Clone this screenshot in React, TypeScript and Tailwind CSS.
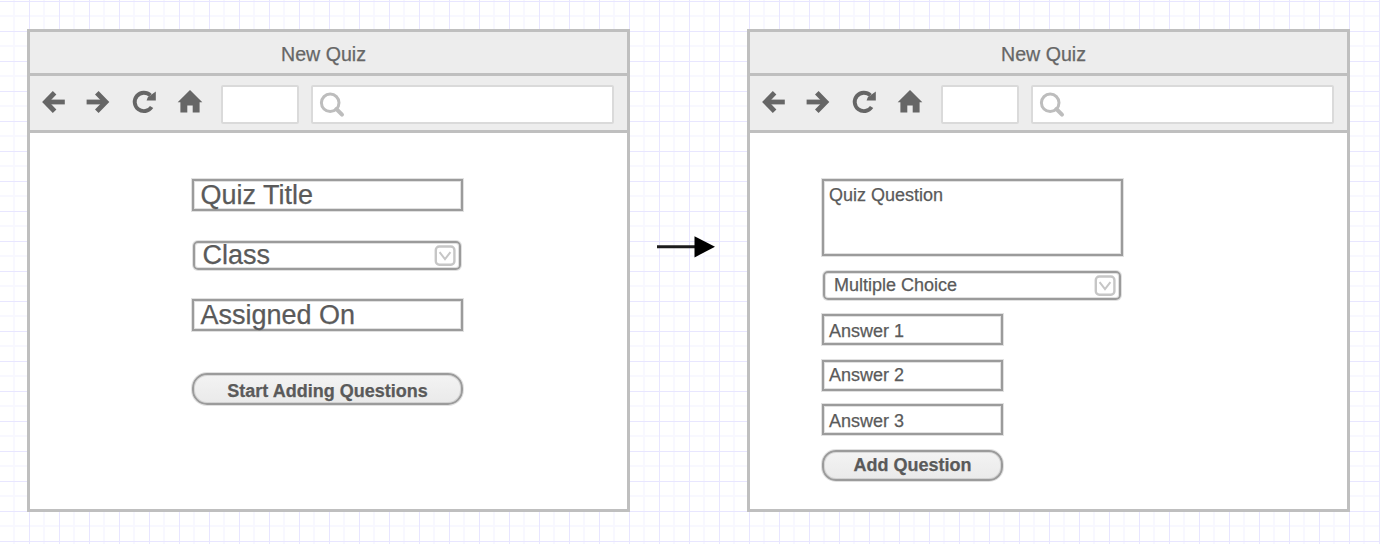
import type { ReactNode } from 'react';

const softEdge =
  'border-2 border-[#9b9b9b] shadow-[0_0_0_1px_rgba(155,155,155,0.3),inset_0_0_0_1px_rgba(155,155,155,0.3)]';

function BackIcon() {
  return (
    <svg className="block" width="24" height="24" viewBox="0 0 24 24" fill="none" stroke="#666" strokeWidth="4.8">
      <path d="M22.8 12H5" />
      <path d="M12.6 2.8L3.6 12l9 9.2" strokeWidth="5" />
    </svg>
  );
}

function ForwardIcon() {
  return (
    <svg className="block" width="24" height="24" viewBox="0 0 24 24" fill="none" stroke="#666" strokeWidth="4.8">
      <path d="M0.6 12h18" />
      <path d="M10.8 2.8L19.8 12l-9 9.2" strokeWidth="5" />
    </svg>
  );
}

function ReloadIcon() {
  return (
    <svg className="block" width="24" height="24" viewBox="0 0 24 24" fill="none">
      <path d="M19.6 17A9.2 9.2 0 1 1 18.4 5.4" stroke="#666" strokeWidth="3.9" />
      <path d="M23.8 1.4v9.2h-9.2l1.2-3.4z" fill="#666" />
    </svg>
  );
}

function HomeIcon() {
  return (
    <svg className="block" width="26" height="24" viewBox="0 0 26 24" fill="#666">
      <path d="M13 0L25.3 12.2h-2.7v10.4h-6.9v-7.2h-5.4v7.2H3.4V12.2H.7z" />
    </svg>
  );
}

function SearchIcon() {
  return (
    <svg className="block" width="26" height="26" viewBox="0 0 26 26" fill="none" stroke="#bdbdbd">
      <circle cx="11.2" cy="10.8" r="8.8" strokeWidth="3" />
      <path d="M17.4 17l5.6 5.6" strokeWidth="4" strokeLinecap="round" />
    </svg>
  );
}

function Chevron() {
  return (
    <svg className="block" width="22" height="22" viewBox="0 0 22 22" fill="none" stroke="#c6c6c6" strokeWidth="2.4">
      <rect x="1.8" y="1.5" width="18.6" height="18.2" rx="3.5" />
      <path d="M5.6 7.2l5.4 7 5.4-7" strokeWidth="2" />
    </svg>
  );
}

function BrowserWindow({ children }: { children: ReactNode }) {
  return (
    <section className="flex h-[483px] w-[603px] flex-col border-3 border-[#bfbfbf] bg-white">
      <header className="flex h-[44px] items-center justify-center border-b-3 border-[#bfbfbf] bg-[#ededed] pr-2.5 text-[19.6px] text-[#666]">
        <h1 className="pt-0.5 leading-6">New Quiz</h1>
      </header>
      <nav className="flex h-[57px] shrink-0 items-start border-b-3 border-[#bfbfbf] bg-[#ededed] pl-3">
        <div className="mt-[14px]"><BackIcon /></div>
        <div className="mt-[14px] ml-5"><ForwardIcon /></div>
        <div className="mt-[14px] ml-[22px]"><ReloadIcon /></div>
        <div className="mt-[14px] ml-[21px]"><HomeIcon /></div>
        <div className="mt-[9px] ml-[18px] h-[39px] w-[78px] rounded-xs border-2 border-[#dadada] bg-white" />
        <div className="mt-[9px] ml-3 h-[39px] w-[303px] rounded-xs border-2 border-[#dadada] bg-white pt-[5px] pl-1.5">
          <SearchIcon />
        </div>
      </nav>
      {children}
    </section>
  );
}

function FlowArrow() {
  return (
    <svg className="mt-[205px] ml-[26px] block" width="60" height="24" viewBox="0 0 60 24">
      <path d="M1 12.8h40" stroke="#1c1c1c" strokeWidth="3" />
      <path d="M38.5 2.2L59 12.8 38.5 23.4z" fill="#000" />
    </svg>
  );
}

export default function App() {
  return (
    <main
      className="flex h-[544px] w-[1380px] items-start overflow-hidden bg-white bg-[linear-gradient(to_right,#e8e6ff_1px,transparent_1px),linear-gradient(to_bottom,#e8e6ff_1px,transparent_1px),linear-gradient(to_right,#f8f8ff_2px,transparent_2px),linear-gradient(to_bottom,#f8f8ff_2px,transparent_2px)] bg-size-[30px_30px] bg-position-[29px_1px,29px_1px,13px_15px,13px_15px] pt-[29px] pl-[27px] font-['Liberation_Sans',Arial,sans-serif] text-[#5a5a5a] [-webkit-text-stroke:0.25px]"
    >
      <BrowserWindow>
        <form className="flex flex-col pt-[46px] pl-[162px]">
          <div className={`h-8 w-[271px] pl-[6.5px] text-[27px] leading-[29px] ${softEdge}`}>Quiz Title</div>
          <div className={`mt-[30px] ml-px flex h-[29px] w-[268px] rounded-[5px] pl-[7.5px] text-[27px] leading-[25px] ${softEdge}`}>
            <span className="flex-1">Class</span>
            <div className="mt-[2px] mr-[3px]"><Chevron /></div>
          </div>
          <div className={`mt-[29px] h-8 w-[271px] pl-[6.5px] text-[27px] leading-[29px] ${softEdge}`}>Assigned On</div>
          <div className={`mt-[42px] flex h-8 w-[271px] items-center justify-center rounded-[15px] bg-linear-to-b from-[#f3f3f3] to-[#eaeaea] pt-1 text-[18px] font-bold ${softEdge}`}>
            Start Adding Questions
          </div>
        </form>
      </BrowserWindow>
      <FlowArrow />
      <div className="ml-[31px]">
        <BrowserWindow>
          <form className="flex flex-col pt-[46px] pl-[72px] text-[18px]">
            <div className={`h-[77px] w-[301px] pt-1 pl-[5px] leading-5 ${softEdge}`}>Quiz Question</div>
            <div className={`mt-[15px] ml-px flex h-[29px] w-[298px] rounded-[5px] pl-[9px] leading-6 ${softEdge}`}>
              <span className="flex-1">Multiple Choice</span>
              <div className="mt-[2px] mr-[3px]"><Chevron /></div>
            </div>
            <div className={`mt-[14px] h-[31px] w-[181px] pl-[5px] pt-[5px] leading-5 ${softEdge}`}>Answer 1</div>
            <div className={`mt-[15px] h-[31px] w-[181px] pl-[5px] pt-[3px] leading-5 ${softEdge}`}>Answer 2</div>
            <div className={`mt-[13px] h-[31px] w-[181px] pl-[5px] pt-[5px] leading-5 ${softEdge}`}>Answer 3</div>
            <div className={`mt-[15px] flex h-[31px] w-[181px] items-center justify-center rounded-[14px] bg-linear-to-b from-[#f3f3f3] to-[#eaeaea] text-[18px] font-bold ${softEdge}`}>
              Add Question
            </div>
          </form>
        </BrowserWindow>
      </div>
    </main>
  );
}
